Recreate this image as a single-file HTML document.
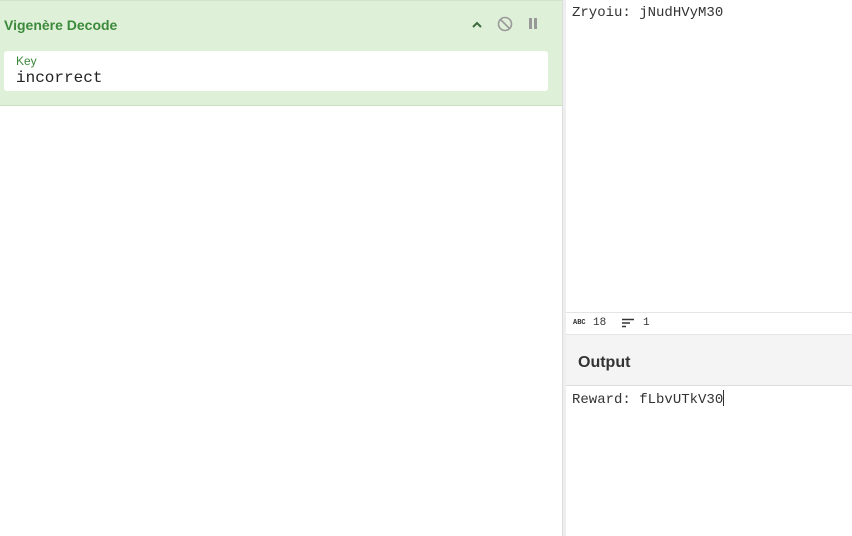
<!DOCTYPE html>
<html><head><style>
body{margin:0;width:852px;height:536px;position:relative;background:#fff;font-family:"Liberation Sans",sans-serif;overflow:hidden}
.mono{font-family:"Liberation Mono",monospace}
#op{position:absolute;left:0;top:0;width:562px;height:106px;background:#dff0d8;border-top:1px solid #d0e4c8;border-bottom:1px solid #c9dfc0;box-sizing:border-box}
#title{position:absolute;left:4px;top:16px;font-size:14px;font-weight:bold;color:#3c8a3c}
#key{position:absolute;left:4px;top:50px;width:544px;height:40px;background:#fff;border-radius:3px}
#key .l{position:absolute;left:12px;top:3px;font-size:12px;color:#3c8a3c}
#key .v{position:absolute;left:12px;top:18px;font-size:16px;color:#222}
#div{position:absolute;left:562px;top:0;width:4px;height:536px;background:#eee;border-left:1px solid #ddd;box-sizing:border-box}
.t{position:absolute;font-size:14px;color:#333}
#status{position:absolute;left:566px;top:312px;width:286px;height:22px;border-top:1px solid #e4e4e4;box-sizing:border-box;background:#fff}
#outh{position:absolute;left:566px;top:334px;width:286px;height:52px;background:#f4f4f4;border-top:1px solid #e6e6e6;border-bottom:1px solid #ddd;box-sizing:border-box}
</style></head><body>
<div id="op">
<div id="title">Vigenère Decode</div>
<svg style="position:absolute;left:470px;top:17px" width="14" height="14"><path d="M3 9 L7 5 L11 9" stroke="#3c6a3c" stroke-width="2" fill="none"/></svg>
<svg style="position:absolute;left:497px;top:15px" width="16" height="16"><circle cx="8" cy="8" r="6.5" stroke="#999" stroke-width="1.6" fill="none"/><path d="M3.5 3.5 L12.5 12.5" stroke="#999" stroke-width="1.6"/></svg>
<div style="position:absolute;left:529px;top:17px;width:3px;height:11px;background:#999"></div>
<div style="position:absolute;left:534px;top:17px;width:3px;height:11px;background:#999"></div>
<div id="key"><div class="l">Key</div><div class="v mono">incorrect</div></div>
</div>
<div id="div"></div>
<div class="t mono" style="left:572px;top:5px">Zryoiu: jNudHVyM30</div>
<div id="status">
<span class="mono" style="position:absolute;left:7px;top:6px;font-size:7px;font-weight:bold;color:#333">ABC</span>
<span class="mono" style="position:absolute;left:27px;top:4px;font-size:11px;color:#333">18</span>
<svg style="position:absolute;left:56px;top:5px" width="13" height="10"><path d="M0 1.5H12M0 5H8M0 8.5H4" stroke="#333" stroke-width="1.5"/></svg>
<span class="mono" style="position:absolute;left:77px;top:4px;font-size:11px;color:#333">1</span>
</div>
<div id="outh"><div style="position:absolute;left:12px;top:19px;font-size:16px;font-weight:bold;color:#333">Output</div></div>
<div class="t mono" style="left:572px;top:390px">Reward: fLbvUTkV30<span style="display:inline-block;width:1px;height:16px;background:#333;vertical-align:-3px"></span></div>
</body></html>
